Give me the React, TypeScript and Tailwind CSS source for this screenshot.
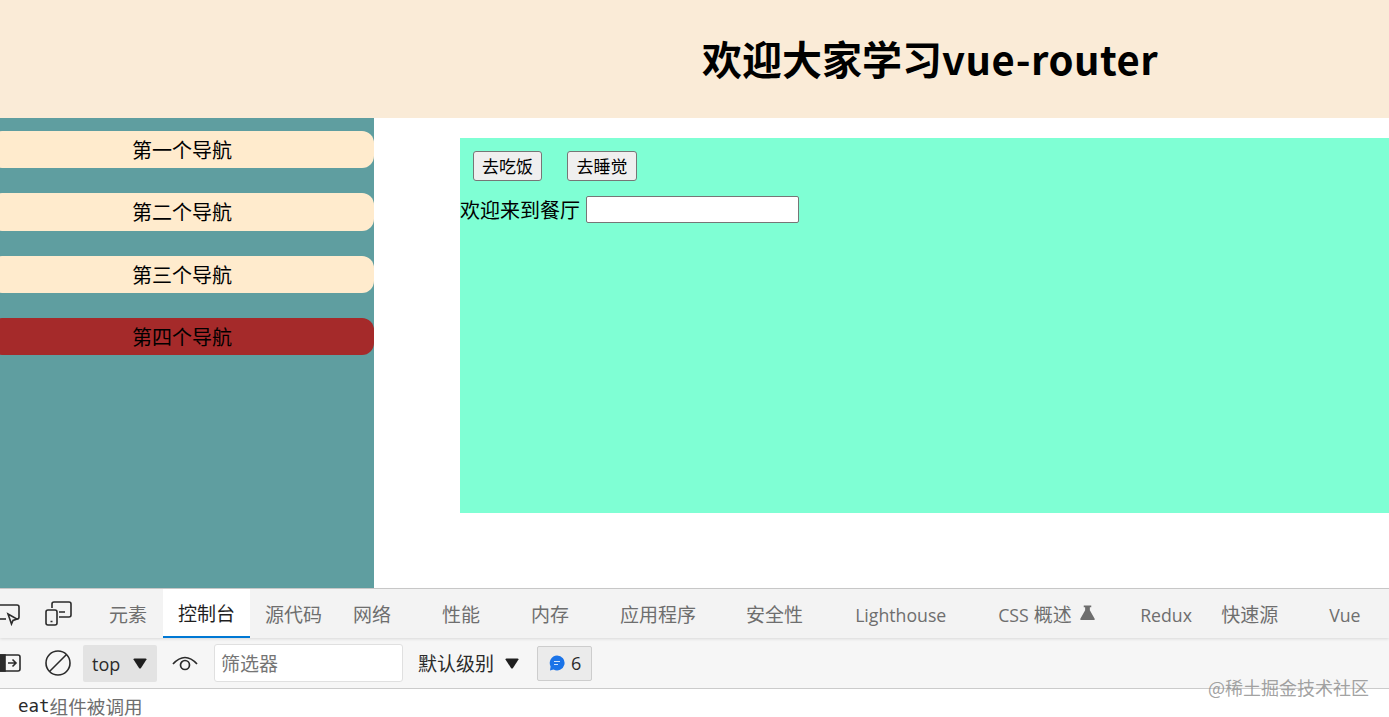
const cjk = "font-['Noto_Sans_CJK_SC',sans-serif]";
const ui = "font-['Open_Sans','Noto_Sans_CJK_SC',sans-serif]";

const navItems = [
  { label: "第一个导航", color: "bg-[#ffebcd]", h: "h-[37px]", mb: "mb-[25px]" },
  { label: "第二个导航", color: "bg-[#ffebcd]", h: "h-[38px]", mb: "mb-[25px]" },
  { label: "第三个导航", color: "bg-[#ffebcd]", h: "h-[37px]", mb: "mb-[25px]" },
  { label: "第四个导航", color: "bg-[#a52a2a]", h: "h-[37px]", mb: "mb-0" },
];

const tabs = [
  { label: "元素", cls: "ml-0" },
  { label: "控制台", cls: "ml-[1px]", active: true },
  { label: "源代码", cls: "ml-0" },
  { label: "网络", cls: "ml-[1px]" },
  { label: "性能", cls: "ml-[21px]" },
  { label: "内存", cls: "ml-[21px]" },
  { label: "应用程序", cls: "ml-[21px]" },
  { label: "安全性", cls: "ml-[20px]" },
];

const ArrowDown = ({ className }: { className: string }) => (
  <svg viewBox="0 0 14 11" className={className}>
    <path d="M0.5 1.5 Q0.5 0.5 1.5 0.5 H12.5 Q13.5 0.5 13.5 1.5 L8 10 Q7 11 6 10 Z" fill="#1f1f1f" />
  </svg>
);

const DevTabs = () => (
  <div className={`relative flex h-[49px] items-stretch whitespace-nowrap bg-[#f3f3f3] text-[19px] text-[#6e6e6e] shadow-[0_1px_3px_rgba(0,0,0,0.12)] ${ui}`}>
    <div className="flex w-[94px] shrink-0 items-center">
      <svg viewBox="0 0 22 24" className="ml-[-1px] h-6 w-[22px]" fill="none" stroke="#2b2b2b" strokeWidth="1.6">
        <path d="M0 3 H18 Q20 3 20 5 V15 Q20 17 18 17 H17" />
        <path d="M0 17 H7" />
        <path d="M9 12 L18 17 L14 18.5 L12.5 22 Z" />
      </svg>
      <svg viewBox="0 0 27 25" className="ml-[24px] h-[25px] w-[27px]" fill="none" stroke="#2b2b2b" strokeWidth="1.6">
        <path d="M7 7 V3 Q7 1 9 1 H24 Q26 1 26 3 V14 Q26 16 24 16 H14" />
        <rect x="1" y="9" width="11" height="15" rx="2" />
        <path d="M14 11 H20 M5.5 20.5 H7.5" />
      </svg>
    </div>
    {tabs.map((t) => (
      <div
        key={t.label}
        className={`flex shrink-0 items-center px-[15px] pt-[3px] ${t.cls} ${
          t.active ? "border-b-2 border-[#0078d4] bg-white text-[#1f1f1f]" : ""
        }`}
      >
        {t.label}
      </div>
    ))}
    <div className="ml-[37px] flex w-[91px] shrink-0 items-center pt-[3px] text-[17.7px]">Lighthouse</div>
    <div className="ml-[52px] flex w-[97px] shrink-0 items-center pt-[3px]">
      <span className="text-[17.7px]">CSS</span>
      <span className="ml-[5px]">概述</span>
      <svg viewBox="0 0 14 14" className="mb-[6px] ml-2 h-[15px] w-[15px]" fill="#6e6e6e">
        <path d="M3.5 0.5 H10.5 V2 H9.2 V5 L13.8 13 Q14 14 13 14 H1 Q0 14 0.2 13 L4.8 5 V2 H3.5 Z" />
      </svg>
    </div>
    <div className="ml-[45px] flex w-[51px] shrink-0 items-center pt-[3px] text-[17.7px]">Redux</div>
    <div className="ml-[30px] flex w-[57px] shrink-0 items-center pt-[3px]">快速源</div>
    <div className="ml-[51px] flex shrink-0 items-center pt-[3px] text-[17.7px]">Vue</div>
  </div>
);

const DevToolbar = () => (
  <div className={`flex h-[50px] items-center whitespace-nowrap bg-[#f6f6f6] text-[19px] text-[#2b2b2b] ${ui}`}>
    <svg viewBox="0 0 22 18" className="ml-[-1px] h-[18px] w-[22px]" fill="none" stroke="#2b2b2b" strokeWidth="1.6">
      <rect x="0" y="1" width="21" height="16" rx="2" />
      <rect x="0" y="1" width="6" height="16" fill="#2b2b2b" />
      <path d="M9 9 H17 M13.5 5.5 L17 9 L13.5 12.5" />
    </svg>
    <svg viewBox="0 0 26 26" className="ml-[24px] h-[26px] w-[26px]" fill="none" stroke="#2b2b2b" strokeWidth="1.6">
      <circle cx="13" cy="13" r="12" />
      <path d="M4.5 21.5 L21.5 4.5" />
    </svg>
    <div className="ml-3 flex h-[37px] w-[74px] items-center rounded-[2px] bg-[#e3e3e3] pl-[9px] pt-[2px] text-[18px]">
      <span className="w-[28px]">top</span>
      <ArrowDown className="ml-[13px] mb-[2px] h-[11px] w-[14px]" />
    </div>
    <svg viewBox="0 0 26 16" className="ml-[15px] h-4 w-[26px]" fill="none" stroke="#2b2b2b" strokeWidth="1.7">
      <path d="M1 9 Q13 -4 25 9" />
      <circle cx="13" cy="10" r="4.5" />
    </svg>
    <div className="ml-[16px] flex h-[38px] w-[189px] items-center rounded-[3px] border border-[#e0e0e0] bg-white pl-[6px] pt-[3px] text-[#757575]">
      筛选器
    </div>
    <span className="ml-[15px] pt-[3px]">默认级别</span>
    <ArrowDown className="ml-[11px] h-[11px] w-[14px]" />
    <div className="ml-[18px] flex h-[35px] w-[55px] items-center rounded-[2px] border border-[#cdcdcd] bg-[#ebebeb] pl-[11px] text-[18px]">
      <svg viewBox="0 0 16 16" className="h-4 w-4">
        <path d="M8 0.5 A7.5 7.5 0 1 1 4.5 14.6 L1 15.5 L1.6 11.5 A7.5 7.5 0 0 1 8 0.5 Z" fill="#1a73e8" />
        <path d="M5 6.5 H11 M5 9.5 H9" stroke="#cfe2fb" strokeWidth="1.2" />
      </svg>
      <span className="ml-[6px]">6</span>
    </div>
  </div>
);

export default function App() {
  return (
    <div className={`relative flex h-[717px] w-[1389px] flex-col overflow-hidden bg-white text-black ${cjk}`}>
      <header className="flex h-[118px] shrink-0 bg-[#faebd7] pl-[702px] pt-[29px]">
        <h1 className="text-[40px] font-bold leading-[58px]">
          欢迎大家学习<span className="tracking-[0.5px]">vue-router</span>
        </h1>
      </header>

      <div className="flex h-[470px] shrink-0">
        <nav className="w-[374px] shrink-0 bg-[#5f9ea0] pt-[13px]">
          {navItems.map((n) => (
            <div
              key={n.label}
              className={`ml-[-10px] flex items-center justify-center rounded-[12px] text-[20px] ${n.h} ${n.mb} ${n.color}`}
            >
              {n.label}
            </div>
          ))}
        </nav>
        <main className="ml-[86px] mt-5 h-[375px] flex-1 bg-[#7fffd4]">
          <div className="flex pl-[13px] pt-[13px]">
            <button className="flex h-[30px] w-[69px] items-center justify-center rounded-[3px] border border-[#767676] bg-[#efefef] text-[17px]">
              去吃饭
            </button>
            <button className="ml-[25px] flex h-[30px] w-[70px] items-center justify-center rounded-[3px] border border-[#767676] bg-[#efefef] text-[17px]">
              去睡觉
            </button>
          </div>
          <div className="mt-[15px] flex items-center text-[20px] leading-[27px]">
            欢迎来到餐厅
            <input className="ml-[6px] h-[27px] w-[213px] rounded-[2px] border border-[#767676] bg-white" />
          </div>
        </main>
      </div>

      <div className="border-t border-[#cbcbcb]">
        <DevTabs />
      </div>
      <div className="border-b border-[#cbcbcb]">
        <DevToolbar />
      </div>
      <div className="flex items-center pl-[18px] pt-[6px] text-[18.6px] leading-[22px]">
        <span className="font-['DejaVu_Sans_Mono',monospace] text-[17.5px] text-[#2b2b2b]">eat</span>
        <span className="text-[#6e6e6e]">组件被调用</span>
      </div>

      <div className="absolute left-[1208px] top-[675px] text-[18px] leading-[24px] text-[#8a8a8a]/80">@稀土掘金技术社区</div>
    </div>
  );
}
